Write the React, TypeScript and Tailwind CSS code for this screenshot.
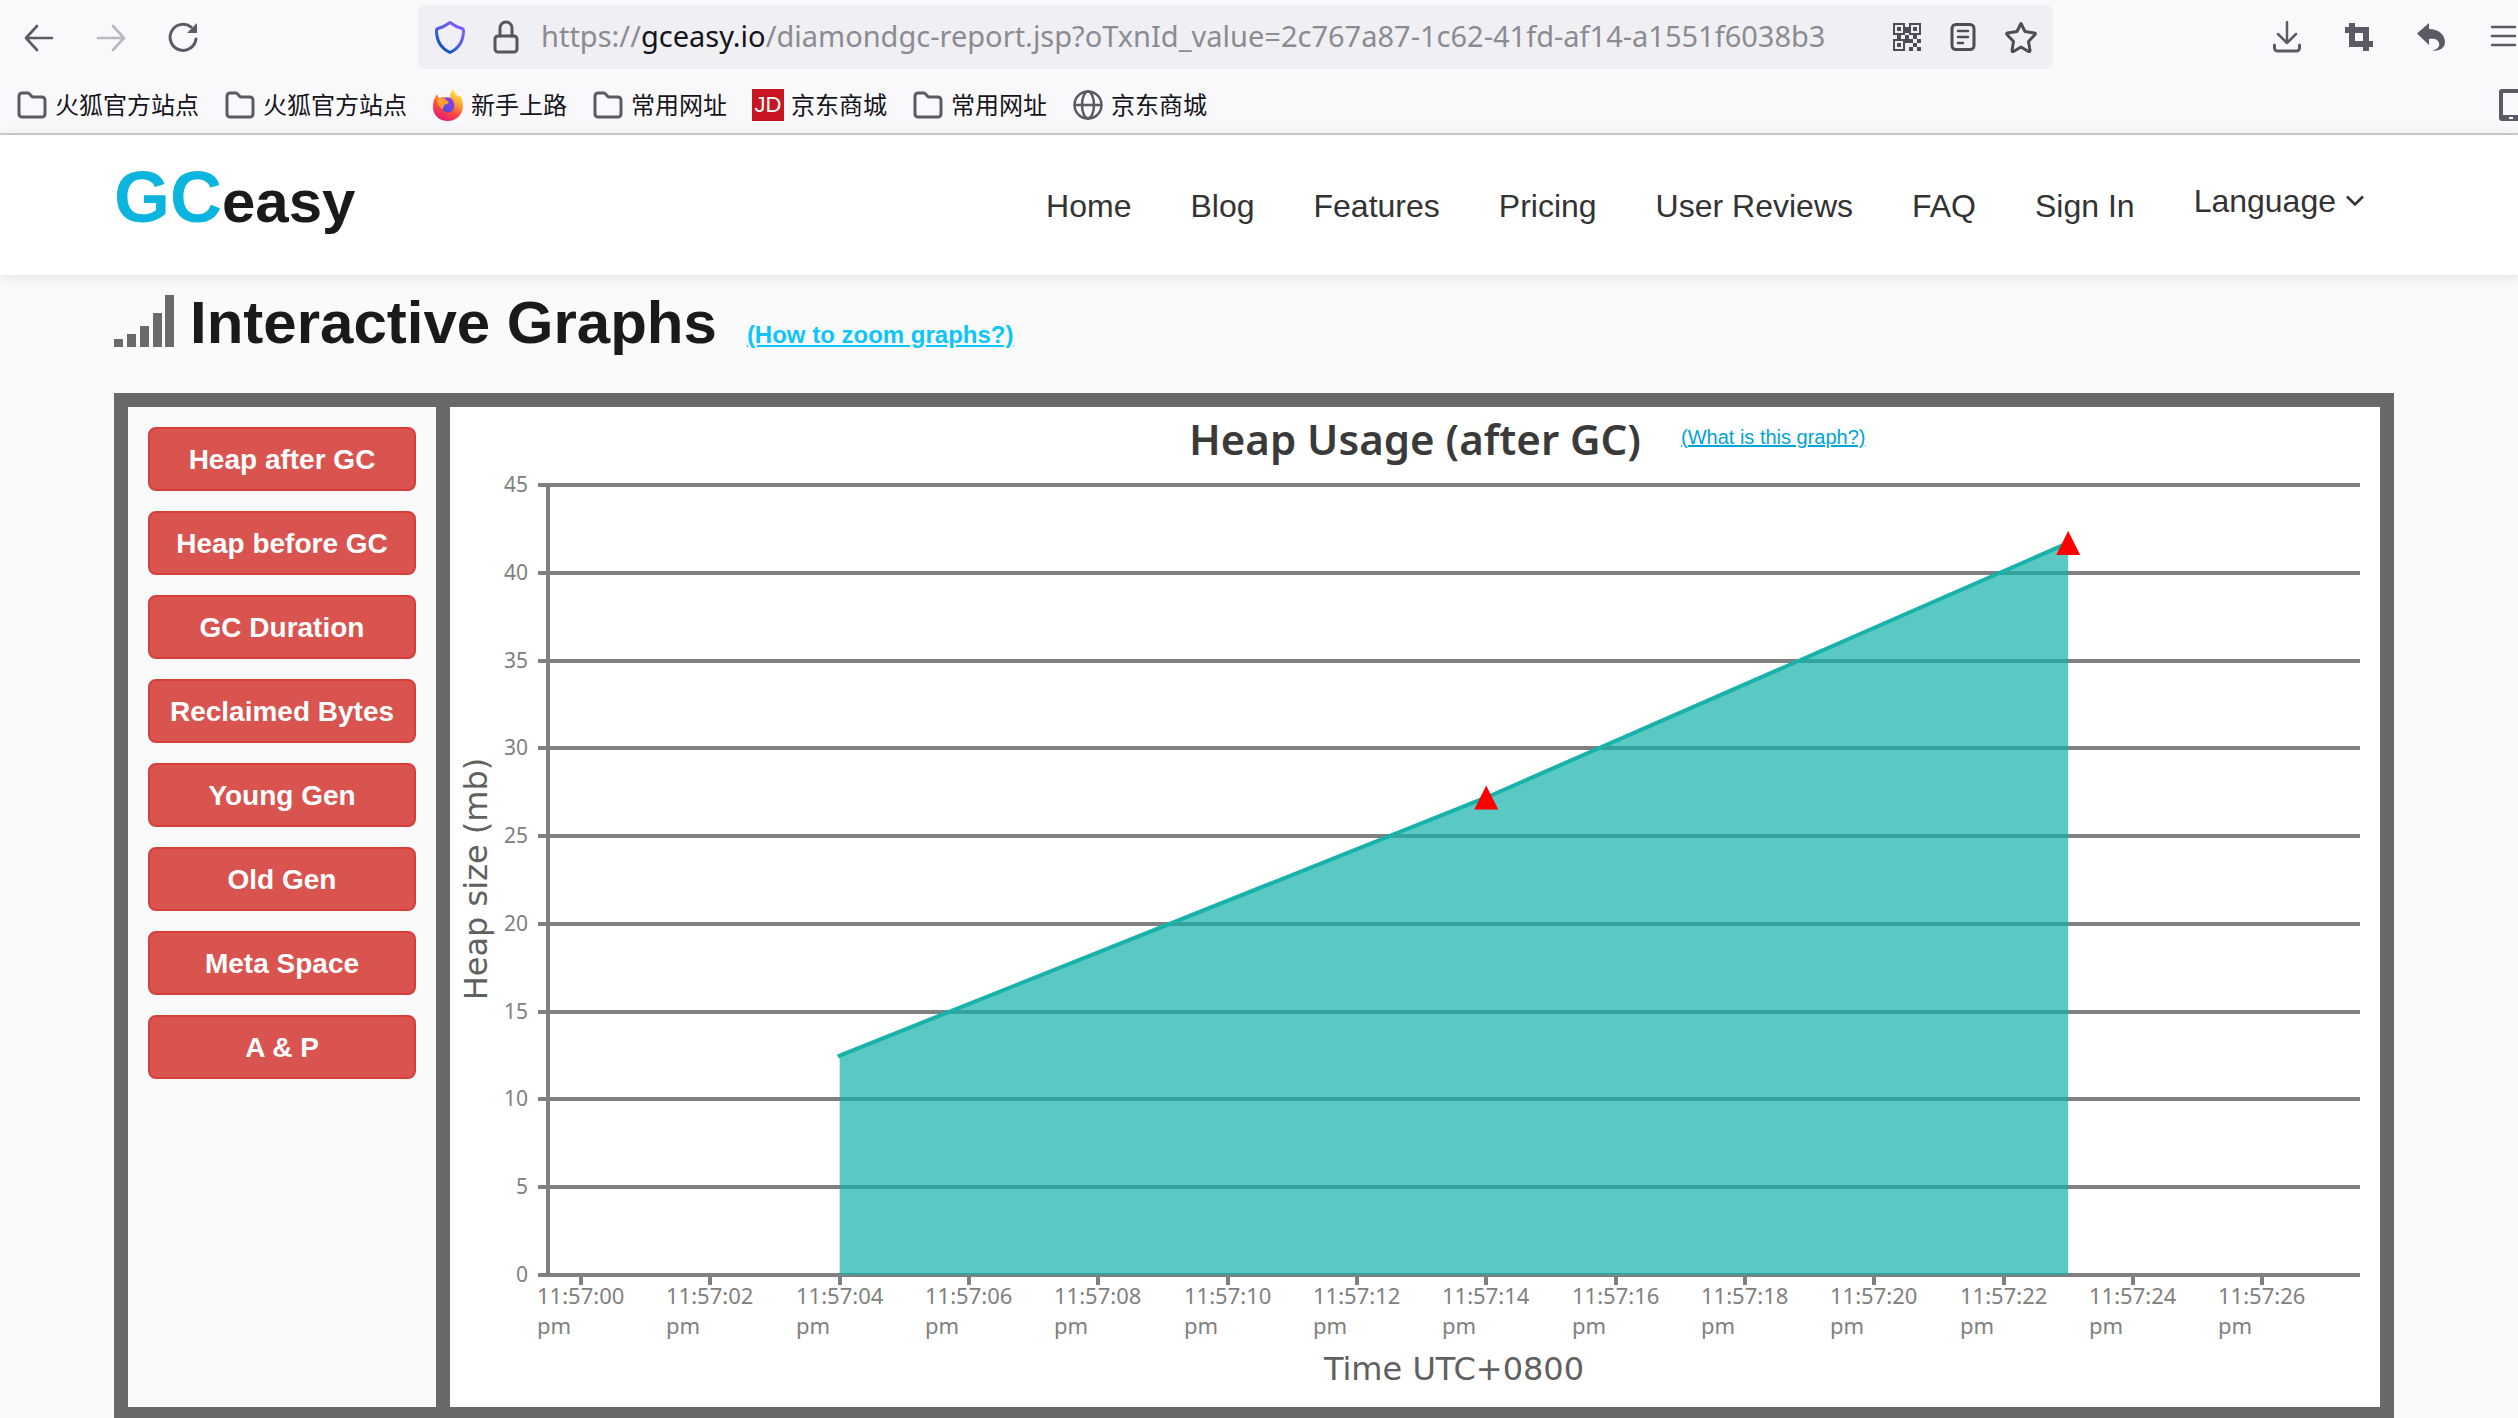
import React from 'react';

const bookmarks = [
  { icon: 'folder', label: '火狐官方站点' },
  { icon: 'folder', label: '火狐官方站点' },
  { icon: 'firefox', label: '新手上路' },
  { icon: 'folder', label: '常用网址' },
  { icon: 'jd', label: '京东商城' },
  { icon: 'folder', label: '常用网址' },
  { icon: 'globe', label: '京东商城' },
];

const navLinks = ['Home', 'Blog', 'Features', 'Pricing', 'User Reviews', 'FAQ', 'Sign In'];

const graphs = [
  'Heap after GC',
  'Heap before GC',
  'GC Duration',
  'Reclaimed Bytes',
  'Young Gen',
  'Old Gen',
  'Meta Space',
  'A & P',
];

const yTicks = [0, 5, 10, 15, 20, 25, 30, 35, 40, 45];
const xTicks = ['00', '02', '04', '06', '08', '10', '12', '14', '16', '18', '20', '22', '24', '26'];

// seconds after 11:57:00, heap size in mb
const points = [
  { t: 4, mb: 12.5, gc: false },
  { t: 14, mb: 27.2, gc: true },
  { t: 23, mb: 41.7, gc: true },
];

const stroke = {
  fill: 'none',
  stroke: '#5b5b66',
  strokeWidth: 3,
  strokeLinecap: 'round' as const,
  strokeLinejoin: 'round' as const,
};

function BookmarkIcon({ name }: { name: string }) {
  if (name === 'firefox') {
    return (
      <svg className="w-[30px] h-8" viewBox="0 0 30 32">
        <defs>
          <linearGradient id="flame" x1="0.8" y1="0" x2="0.3" y2="1">
            <stop offset="0" stopColor="#fff44f" />
            <stop offset="0.35" stopColor="#ffa436" />
            <stop offset="0.65" stopColor="#ff4a41" />
            <stop offset="1" stopColor="#e5177b" />
          </linearGradient>
          <linearGradient id="core" x1="0.7" y1="0" x2="0.3" y2="1">
            <stop offset="0" stopColor="#a03bf0" />
            <stop offset="1" stopColor="#4a4fd0" />
          </linearGradient>
        </defs>
        <path
          fill="url(#flame)"
          d="M20 0c1 4 4 5 5 8l2-2c2 3 3 7 3 11 0 8-6 15-15 15S0 26 0 18c0-5 1-9 4-13l2 4c2-1 3-1 5-1l6 1c0-4 1-7 3-9z"
        />
        <circle cx="15" cy="17" r="6.5" fill="url(#core)" />
        <path fill="url(#core)" d="M11 9c4-2 8 0 9 3l1 4-5-2z" />
        <path fill="#ffa02c" d="M4 10c3-2 6-1 9 1l3 2c-1 2-4 2-5 3-1 2 0 3-2 4-3-2-5-6-5-10z" />
      </svg>
    );
  }
  if (name === 'jd') {
    return (
      <span className="w-8 h-8 -mx-px bg-[#c91623] text-white text-[22px] leading-8 text-center font-[Liberation_Sans,sans-serif]">
        JD
      </span>
    );
  }
  if (name === 'globe') {
    return (
      <svg className="w-[30px] h-8" viewBox="0 0 30 32" {...stroke} strokeWidth={2.5}>
        <circle cx="15" cy="16" r="13.5" />
        <ellipse cx="15" cy="16" rx="6" ry="13.5" />
        <path d="M2 16h26" />
      </svg>
    );
  }
  return (
    <svg className="w-[30px] h-8" viewBox="0 0 30 32" {...stroke}>
      <path d="M2 7a3 3 0 0 1 3-3h6c2 0 3 4 5 4h9a3 3 0 0 1 3 3v14a3 3 0 0 1-3 3H5a3 3 0 0 1-3-3z" />
    </svg>
  );
}

function BrowserBar() {
  return (
    <div className="bg-[#f9f9fb] border-b-2 border-[#cccccc] overflow-hidden">
      <div className="flex items-center pt-[5px] pl-6 pr-px">
        <div className="flex gap-[42px]">
          <button aria-label="Back">
            <svg className="w-[30px] h-[30px]" viewBox="0 0 30 30" {...stroke}>
              <path d="M28 16H3M13 4L2 16l11 12" strokeWidth="2.6" />
            </svg>
          </button>
          <button aria-label="Forward" className="opacity-40">
            <svg className="w-[30px] h-[30px]" viewBox="0 0 30 30" {...stroke}>
              <path d="M2 16h25M17 4l11 12-11 12" strokeWidth="2.6" />
            </svg>
          </button>
          <button aria-label="Reload">
            <svg className="w-[30px] h-[30px]" viewBox="0 0 30 30" {...stroke}>
              <path d="M28 17A13 13 0 1 1 23 5" />
              <path d="M29 1v10H19z" fill="#5b5b66" stroke="none" />
            </svg>
          </button>
        </div>

        <div className="relative flex-1 min-w-0 flex items-center h-16 mx-[220px] pl-[17px] pr-4 rounded-lg bg-[#f0f0f4]">
          <svg className="shrink-0 w-[30px] h-[34px]" viewBox="0 0 30 34" fill="none">
            <defs>
              <linearGradient id="shield" x1="1" y1="0" x2="0.2" y2="1">
                <stop offset="0" stopColor="#9059ff" />
                <stop offset="0.5" stopColor="#5b5fe8" />
                <stop offset="1" stopColor="#0250bb" />
              </linearGradient>
            </defs>
            <path
              d="M15 2.5c4 3 8 5 12 6 1.5.5 1.5 1 1.5 2 0 10-5 18-13.5 22C6.5 28.5 1.5 20.5 1.5 10.5c0-1 0-1.5 1.5-2 4-1 8-3 12-6z"
              stroke="url(#shield)"
              strokeWidth="3"
              strokeLinejoin="round"
            />
          </svg>
          <svg className="shrink-0 w-[26px] h-[34px] ml-7" viewBox="0 0 26 34" {...stroke} stroke="#55555c">
            <rect x="2" y="16" width="22" height="16" rx="3" />
            <path d="M7 16V8a6 6 0 0 1 12 0v8" />
          </svg>
          <span className="flex-1 min-w-0 ml-[22px] pb-0.5 text-[29px] leading-10 whitespace-nowrap text-[#8b8b91] font-[Noto_Sans,Open_Sans,sans-serif]">
            https://<span className="text-[#15141a]">gceasy.io</span>/diamondgc-report.jsp?oTxnId_value=2c767a87-1c62-41fd-af14-a1551f6038b3
          </span>
          <input aria-label="Address" className="absolute inset-0 w-full rounded-lg bg-transparent" />
          <div className="relative flex items-center gap-7">
            <button aria-label="QR code">
              <svg className="w-7 h-7" viewBox="0 0 28 28" fill="#4d4d55">
                <path fillRule="evenodd" d="M0 0h12v12H0zM2 2v8h8V2zM16 0h12v12H16zM18 2v8h8V2zM0 16h12v12H0zM2 18v8h8v-8z" />
                <path d="M4 4h4v4H4zM20 4h4v4h-4zM4 20h4v4H4zM12 4h4v4h-4zM4 12h4v4H4zM12 12h4v4h-4zM20 12h4v4h-4zM16 16h4v4h-4zM24 16h4v4h-4zM12 20h4v-4h-4zM20 20h4v4h-4zM16 24h4v4h-4zM24 24h4v4h-4zM12 8h4v2h-4z" />
              </svg>
            </button>
            <button aria-label="Reader view">
              <svg className="w-7 h-7" viewBox="0 0 28 28" {...stroke} stroke="#4d4d55">
                <rect x="3" y="1.5" width="22" height="25" rx="4" />
                <path d="M9 8h10M9 14h10M9 20h5" strokeWidth="2.5" />
              </svg>
            </button>
            <button aria-label="Bookmark this page">
              <svg className="w-8 h-8" viewBox="0 0 32 32" {...stroke} stroke="#4d4d55">
                <path d="M16 2.5l4 8 9.5 1.5c1 .2 1 1 .5 1.5l-6.5 7 1.5 9c0 1-.5 1.5-1.5 1L16 26l-7.5 4.5c-1 .5-1.5 0-1.5-1l1.5-9-6.5-7c-.5-.5-.5-1.300.5-1.5L12 10.5z" />
              </svg>
            </button>
          </div>
        </div>

        <div className="shrink-0 flex items-center gap-11">
          <button aria-label="Downloads">
            <svg className="w-7 h-8" viewBox="0 0 28 32" {...stroke}>
              <path d="M14 1v20M5 13l9 9 9-9" strokeWidth="2.5" />
              <path d="M1.5 24v3a3 3 0 0 0 3 3h19a3 3 0 0 0 3-3v-3" />
            </svg>
          </button>
          <button aria-label="Screenshot">
            <svg className="w-7 h-7" viewBox="0 0 28 28" fill="#5b5b66">
              <path fillRule="evenodd" d="M4 0h6v4h14v14h4v6h-4v4h-6v-4H4V10H0V4h4zM10 10v8h8v-8z" />
            </svg>
          </button>
          <button aria-label="Undo">
            <svg className="w-7 h-7" viewBox="0 0 28 28" fill="#5b5b66">
              <path d="M12 0v6c11 0 16 7 16 13 0 5-4 9-13 9 6-2 8-5 7-8-1-4-5-5-10-4v6L0 10.5z" />
            </svg>
          </button>
          <button aria-label="Menu">
            <svg className="w-7 h-7" viewBox="0 0 28 28" {...stroke}>
              <path d="M3 4h23M3 13h23M3 22h23" strokeWidth="2.5" />
            </svg>
          </button>
        </div>
      </div>

      <div className="flex items-center h-16 pt-2 pl-[17px]">
        <div className="flex gap-[26px]">
          {bookmarks.map((b, i) => (
            <a
              key={i}
              href="#"
              className="flex items-center gap-2 text-2xl leading-8 whitespace-nowrap text-[#15141a] font-[Noto_Sans,Noto_Sans_CJK_SC,sans-serif]"
            >
              <BookmarkIcon name={b.icon} />
              {b.label}
            </a>
          ))}
        </div>
        <button aria-label="Mobile bookmarks" className="w-[19px] h-8 ml-auto overflow-hidden">
          <svg className="w-6 h-8 max-w-none" viewBox="0 0 24 32" fill="#5b5b66">
            <path fillRule="evenodd" d="M3 0h24v32H3a3 3 0 0 1-3-3V3a3 3 0 0 1 3-3zM4 4v22h20V4zM10 28v2h4v-2z" />
          </svg>
        </button>
      </div>
    </div>
  );
}

function Header() {
  return (
    <header className="relative flex items-center justify-between h-[140px] pl-[114px] pr-[154px] bg-white shadow-[0_2px_12px_rgba(0,0,0,0.1)]">
      <a href="#" className="flex items-baseline pb-4 font-bold leading-none">
        <span className="text-7xl text-[#0bb5dd]">GC</span>
        <span className="text-6xl text-[#1a1a1a]">easy</span>
      </a>
      <nav className="flex items-center gap-[59px] pt-0.5 text-[32px] leading-10 text-[#333333]">
        {navLinks.map((link) => (
          <a key={link} href="#" className="whitespace-nowrap">{link}</a>
        ))}
        <button className="flex items-center gap-2.5 pb-2.5">
          Language
          <svg className="w-[18px] h-3" viewBox="0 0 18 12" fill="none" stroke="#333333" strokeWidth="2.5">
            <path d="M1 1.5l8 8 8-8" />
          </svg>
        </button>
      </nav>
    </header>
  );
}

function HeapChart() {
  const x = (t: number) => 131 + t * 64.66;
  const y = (mb: number) => 808 - mb * 17.556;
  const line = points.map((p) => `${x(p.t)},${y(p.mb)}`).join(' ');
  const area = `${x(points[0].t)},808 ${line} ${x(points[2].t)},808`;

  return (
    <svg className="block w-full" viewBox="0 0 1930 940" role="img" aria-label="Heap Usage (after GC)">
      <g stroke="#808080" strokeWidth="4">
        {yTicks.map((v) => (
          <path key={v} d={`M88 ${Math.round(y(v))}H1910`} />
        ))}
        {xTicks.map((s, i) => (
          <path key={s} d={`M${Math.round(x(i * 2))} 808v10`} />
        ))}
        <path d="M98 18v790" />
      </g>
      <g className="font-[Noto_Sans,Open_Sans,sans-serif]" fill="#808080">
        {yTicks.map((v) => (
          <text key={v} x="78" y={Math.round(y(v)) + 7} textAnchor="end" className="text-[21px]">{v}</text>
        ))}
        {xTicks.map((s, i) => (
          <text key={s} x={Math.round(x(i * 2)) - 44} y="837" className="text-[22px]">
            11:57:{s}
            <tspan x={Math.round(x(i * 2)) - 44} dy="30">pm</tspan>
          </text>
        ))}
      </g>
      <polygon points={area} fill="#14b2aa" fillOpacity="0.7" />
      <polyline points={line} fill="none" stroke="#17b2aa" strokeWidth="4" strokeLinecap="square" />
      {points.filter((p) => p.gc).map((p) => (
        <path key={p.t} d={`M${x(p.t)} ${y(p.mb) - 12}l12 24h-24z`} fill="#ff0000" />
      ))}
      <g className="text-[32px] font-[DejaVu_Sans,Verdana,sans-serif]" fill="#606060">
        <text x="1004" y="913" textAnchor="middle">Time UTC+0800</text>
        <text transform="translate(37 412) rotate(-90)" textAnchor="middle">Heap size (mb)</text>
      </g>
    </svg>
  );
}

function App() {
  return (
    <div className="min-h-screen bg-[#fafafa] font-[Liberation_Sans,Arial,sans-serif]">
      <BrowserBar />
      <Header />
      <main className="pt-4 pl-[114px] pr-[124px]">
        <div className="flex items-baseline h-[102px]">
          <svg className="w-[60px] h-[52px] mr-4 translate-y-1" viewBox="0 0 60 52" fill="#6a6a6a">
            <path d="M0 44h9v8H0zM13 39h9v13h-9zM26 31h9v21h-9zM39 18h9v34h-9zM51 0h9v52h-9z" />
          </svg>
          <h1 className="text-6xl leading-none font-bold text-[#1a1a1a]">Interactive Graphs</h1>
          <a href="#" className="ml-[30px] text-2xl font-bold underline text-[#0dc5fb]">(How to zoom graphs?)</a>
        </div>

        <div className="flex border-14 border-b-11 border-[#696969]">
          <aside className="w-[322px] shrink-0 flex flex-col gap-5 p-5 border-r-14 border-[#696969]">
            {graphs.map((name) => (
              <button
                key={name}
                className="h-16 pt-0.5 rounded-lg border-2 border-[#d43f3a] bg-[#d9534f] text-[28px] leading-8 font-bold whitespace-nowrap text-white"
              >
                {name}
              </button>
            ))}
          </aside>
          <section className="flex-1 min-w-0 bg-white">
            <div className="grid grid-cols-[1fr_auto_1fr] items-center h-[60px]">
              <h2 className="col-start-2 pt-1 text-[42px] leading-[48px] font-semibold text-[#3a3a3a] font-[Noto_Sans,Open_Sans,sans-serif]">
                Heap Usage (after GC)
              </h2>
              <a href="#" className="justify-self-start ml-10 text-xl underline text-[#00a5d5]">(What is this graph?)</a>
            </div>
            <HeapChart />
          </section>
        </div>
      </main>
    </div>
  );
}

export default App;
